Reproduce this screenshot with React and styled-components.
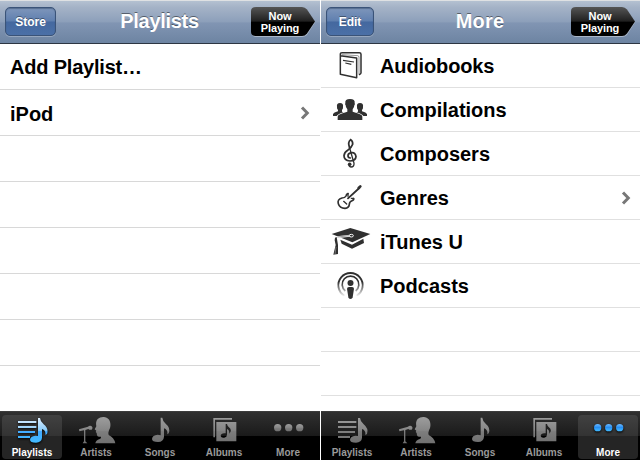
import React from "react";
import styled, { createGlobalStyle, css } from "styled-components";

const Global = createGlobalStyle`
  * { box-sizing: border-box; }
  body { margin: 0; background: #fff; font-family: "Liberation Sans", Arial, sans-serif; font-weight: 700; }
`;

const Screens = styled.div`
  width: 640px;
  height: 460px;
  display: grid;
  grid-template-columns: 320px 319px;
  column-gap: 1px;
  overflow: hidden;
  background: #fff;
`;
const Screen = styled.section`
  display: flex;
  flex-direction: column;
  height: 460px;
  min-width: 0;
`;
const NavBar = styled.header`
  height: 44px;
  flex: none;
  display: grid;
  grid-template-columns: 70px 1fr 70px;
  align-items: start;
  padding: 6px 4px 0 5px;
  border-top: 1px solid #dfe1e3;
  border-bottom: 1px solid #2d3642;
  background: linear-gradient(#b4c1d1 0, #a5b3c7 6px, #8c9fba 50%, #8195b3 52%, #6d84a2 100%);
`;
const NavButton = styled.button`
  justify-self: start;
  width: ${(p) => p.$width}px;
  height: 29px;
  padding: 0;
  border: 1px solid #3a5378;
  border-radius: 5px;
  background: linear-gradient(#7e96bb 0, #5f7faf 49%, #44689f 51%, #4b70a7 100%);
  box-shadow: 0 1px 0 rgba(255, 255, 255, 0.25), inset 0 1px 1px rgba(30, 50, 80, 0.4);
  color: #fff;
  font: 700 12px "Liberation Sans", Arial, sans-serif;
  text-shadow: 0 -1px 0 rgba(0, 0, 0, 0.4);
`;
const Title = styled.h1`
  margin: 0;
  padding: 2px 2px 0 0;
  text-align: center;
  color: #fff;
  font-size: 20px;
  line-height: 24px;
  letter-spacing: ${(p) => p.$tracking}px;
  text-shadow: 0 -1px 0 rgba(0, 0, 0, 0.45);
`;
const NowPlaying = styled.button`
  justify-self: end;
  display: grid;
  width: 65px;
  height: 31px;
  padding: 0;
  border: 0;
  background: none;
  color: #fff;
  font: 700 11px/12px "Liberation Sans", Arial, sans-serif;
  letter-spacing: -0.1px;
  > * { grid-area: 1 / 1; }
`;
const NowLabel = styled.span`
  z-index: 1;
  width: 58px;
  padding-top: 2.5px;
  text-align: center;
`;
const List = styled.ul`
  flex: 1;
  margin: 0;
  padding: 0;
  list-style: none;
  overflow: hidden;
  background: #fff;
`;
const Row = styled.li`
  display: flex;
  align-items: center;
  height: ${(p) => p.$height}px;
  padding-left: ${(p) => (p.$inset ? 10 : 0)}px;
  padding-right: ${(p) => (p.$inset ? 10 : 9)}px;
  border-bottom: 1px solid ${(p) => (p.$inset ? "#d8d8d8" : "#e0e0e0")};
  color: #000;
`;
const RowText = styled.span`
  flex: 1;
  font-size: 20px;
  line-height: 24px;
  letter-spacing: ${(p) => p.$tracking || 0}px;
  padding-top: ${(p) => (p.$drop ? 3 : 1)}px;
`;
const RowIcon = styled.svg`
  flex: none;
  width: 59px;
  height: 43px;
`;
const TabBar = styled.nav`
  flex: none;
  height: 49px;
  display: grid;
  grid-template-columns: 60px 60px 60px 60px 60px;
  column-gap: 4px;
  padding: 3px 0 2px ${(p) => p.$inset}px;
  border-top: 1px solid #3c3c3c;
  background: linear-gradient(#303030 0, #1a1a1a 24px, #000 24px);
`;
const Tab = styled.button`
  display: flex;
  flex-direction: column;
  align-items: center;
  height: 44px;
  padding: 0;
  border: 0;
  border-radius: 4px;
  background: none;
  color: #9a9a9a;
  font: 700 10px/12px "Liberation Sans", Arial, sans-serif;
  ${(p) =>
    p.$active &&
    css`
      color: #fff;
      background: linear-gradient(#414141 0, #333 21px, #252525 21px, #252525 100%);
    `}
`;
const TabIcon = styled.svg`
  width: 60px;
  height: 32px;
  flex: none;
  filter: ${(p) => (p.$active ? "drop-shadow(0 1px 1px #000)" : "none")};
`;

const Chevron = () => (
  <svg width="10" height="14" viewBox="0 0 10 14">
    <path d="M2 1.5 7.3 7 2 12.5" fill="none" stroke="#777" strokeWidth="3" />
  </svg>
);

const rowIcons = {
  Audiobooks: (
    <RowIcon viewBox="3 132 177 129" fill="none" stroke="#303030" strokeWidth="4.5" strokeLinejoin="round">
      <path d="M61 167 110 174V233L61 223V161Q61 158 66 158H118Q123 158 123 163V219Q123 222 117 224" />
      <path d="M65 164 113 167Q117 167 117 172V224" strokeWidth="1.5" />
      <path d="M69 181 102 186M76 189 94 193" strokeWidth="3.5" />
    </RowIcon>
  ),
  Compilations: (
    <RowIcon viewBox="3 264 177 129" fill="#303030">
      <path d="M53 360V350Q54 344 68 340L82 335V328Q77 323 77 316Q74 313 76 309Q74 297 90 297Q106 297 104 309Q106 313 103 316Q103 323 98 328V335L112 340Q126 344 127 350V360Z" />
      <path d="M39 348V342Q41 338 54 334V330Q50 326 51 321Q49 309 60 309Q71 309 69 321Q70 326 66 330V335L71 337Q54 342 50 348Z" />
      <path d="M141 348V342Q139 338 126 334V330Q130 326 129 321Q131 309 120 309Q109 309 111 321Q110 326 114 330V335L109 337Q126 342 130 348Z" />
    </RowIcon>
  ),
  Composers: (
    <RowIcon viewBox="3 6 177 129" fill="none" stroke="#303030" strokeLinecap="round">
      <path d="M89 53Q82 37 92 29Q99 34 98 43Q95 53 83 61Q73 67 72 77Q72 91 90 93Q107 92 108 80Q106 67 95 68Q84 69 84 77Q84 83 91 84" strokeWidth="5.2" />
      <path d="M88 51 102 99Q103 111 93 111Q86 110 87 103" strokeWidth="4" />
      <circle cx="89" cy="103" r="5.5" fill="#303030" stroke="none" />
    </RowIcon>
  ),
  Genres: (
    <RowIcon viewBox="3 138 177 129" fill="none" stroke="#303030" strokeLinejoin="round" strokeLinecap="round">
      <path d="M84 191Q79 192 78 198Q75 204 66 204Q51 208 55 221Q59 234 75 235Q87 234 88 223Q88 215 96 212Q102 210 101 206" strokeWidth="5" />
      <path d="M84 205 118 174" strokeWidth="5.500" />
      <path d="M116 174 121 169" strokeWidth="8" />
      <path d="M71 214 80 222M84 190V199M94 205H101" strokeWidth="4" />
    </RowIcon>
  ),
  "iTunes U": (
    <RowIcon viewBox="3 15 177 129">
      <path d="M35 57 91 39 151 57 97 82Z" fill="#303030" />
      <path d="M61 74 96 89 130 71 132 84 96 101 65 86Z" fill="#303030" />
      <path d="M90 62 47 67V85" fill="none" stroke="#fff" strokeWidth="6" />
      <path d="M45 68 50 66 52 78 54 90V117L40 119 47 90 44 76Z" fill="#303030" />
      <path d="M89 62 52 66" stroke="#303030" strokeWidth="1.500" />
      <ellipse cx="94" cy="62" rx="6" ry="4" fill="#303030" stroke="#fff" strokeWidth="3" />
      <path d="M48 96 45 118" stroke="#fff" strokeWidth="1" />
    </RowIcon>
  ),
  Podcasts: (
    <RowIcon viewBox="3 147 177 129" fill="none">
      <defs>
        <linearGradient id="cast" gradientUnits="userSpaceOnUse" x1="0" y1="175" x2="0" y2="248">
          <stop offset=".35" stopColor="#303030" />
          <stop offset=".95" stopColor="#303030" stopOpacity=".05" />
        </linearGradient>
      </defs>
      <path d="M73 242A36.5 36.5 0 1 1 110 242" stroke="url(#cast)" strokeWidth="5.5" />
      <path d="M76 228A25 25 0 1 1 107 228" stroke="url(#cast)" strokeWidth="5" />
      <circle cx="91.500" cy="204" r="9" fill="#303030" />
      <path d="M81 221Q81 216 87 216H96Q102 216 102 221L98 247Q97 252 91 252Q86 252 85 247Z" fill="#303030" />
    </RowIcon>
  ),
};

/* Tab artwork is drawn on a 180 x 96 grid, three units to the pixel. */
const tabArt = {
  Playlists: (
    <>
      <path d="M48 18H103V24H48ZM48 33H103V39H48ZM48 48H99V54H48ZM48 63H84V69H48Z" />
      <path d="M108 9H114Q115 20 125 28Q141 41 135 57L130 60Q132 46 120 42V68Q119 82 102 83Q84 83 84 74Q85 63 100 62L108 63Z" />
    </>
  ),
  Artists: (
    <>
      <path d="M88 85Q89 76 101 72Q106 70 105 65Q95 67 93 61L92 54 89 51 91 47 86 43 91 34Q88 20 95 12Q103 5 114 6Q128 8 132 20Q136 34 129 46Q126 53 128 60Q144 67 148 85Z" />
      <path d="M39 43 66 35Q70 31 76 33Q81 36 79 41Q77 46 70 44L67 42 58 45V79L64 85H50L54 79V46L40 49Z" />
    </>
  ),
  Songs: <path d="M92 8H97Q98 19 107 26Q123 39 116 55L112 58Q114 44 102 40V65Q101 80 84 81Q66 81 66 72Q67 60 83 59L92 61Z" />,
  Albums: (
    <>
      <path d="M58 9H114V14H63V67H58Z" />
      <path fillRule="evenodd" d="M67 21H127V79H67ZM95 27V55Q81 53 80 63Q82 70 91 68Q99 66 99 59V42Q107 46 106 56Q116 45 104 36Q100 33 99 27Z" />
    </>
  ),
  More: (
    <>
      <circle cx="59" cy="38" r="11" />
      <circle cx="92" cy="38" r="11" />
      <circle cx="125" cy="38" r="11" />
    </>
  ),
};

function Tabs({ active, prefix, inset }) {
  return (
    <TabBar $inset={inset}>
      {Object.keys(tabArt).map((name) => {
        const on = name === active;
        const dots = name === "More";
        const id = `${prefix}-${name}`;
        return (
          <Tab key={name} $active={on}>
            <TabIcon $active={on} viewBox="0 0 180 96" fill={`url(#${id})`}>
              <defs>
                <linearGradient id={id} gradientUnits="userSpaceOnUse" x1="0" y1={dots ? 27 : 8} x2="0" y2={dots ? 49 : 84}>
                  <stop offset="0" stopColor={on ? (dots ? "#6bb9ff" : "#e0efff") : "#9c9c9c"} />
                  <stop offset=".5" stopColor={on ? (dots ? "#258cf0" : "#8accfa") : "#868686"} />
                  <stop offset=".55" stopColor={on ? (dots ? "#2b98f7" : "#41aaff") : "#7d7d7d"} />
                  <stop offset="1" stopColor={on ? "#43bbff" : "#707070"} />
                </linearGradient>
              </defs>
              {tabArt[name]}
            </TabIcon>
            {name}
          </Tab>
        );
      })}
    </TabBar>
  );
}

function Nav({ title, action, width, tracking, prefix }) {
  return (
    <NavBar>
      <NavButton $width={width}>{action}</NavButton>
      <Title $tracking={tracking}>{title}</Title>
      <NowPlaying>
        <svg width="65" height="31" viewBox="0 0 65 31">
          <defs>
            <linearGradient id={`${prefix}-now`} x1="0" y1="0" x2="0" y2="1">
              <stop offset="0" stopColor="#555" />
              <stop offset=".49" stopColor="#202020" />
              <stop offset=".52" stopColor="#000" />
            </linearGradient>
          </defs>
          <path d="M5 1H51Q54 1 56 3L64 15.500 56 28Q54 30 51 30H5Q1 30 1 26V5Q1 1 5 1Z" fill="#a9b6c8" />
          <path d="M5 0H51Q54 0 56 2.500L64 14.500 56 26.500Q54 29 51 29H5Q0 29 0 25V4Q0 0 5 0Z" fill={`url(#${prefix}-now)`} />
        </svg>
        <NowLabel>Now<br />Playing</NowLabel>
      </NowPlaying>
    </NavBar>
  );
}

const playlists = [
  { name: "Add Playlist…", tracking: -0.2 },
  { name: "iPod", drop: true, chevron: true },
  {}, {}, {}, {}, {}, {},
];
const categories = [...Object.keys(rowIcons), "", ""];

export default function App() {
  return (
    <>
      <Global />
      <Screens>
        <Screen>
          <Nav title="Playlists" action="Store" width={51} tracking={-0.3} prefix="left" />
          <List>
            {playlists.map(({ name, tracking, drop, chevron }, i) => (
              <Row key={i} $height={46} $inset>
                <RowText $tracking={tracking} $drop={drop}>{name}</RowText>
                {chevron && <Chevron />}
              </Row>
            ))}
          </List>
          <Tabs active="Playlists" prefix="left" inset={2} />
        </Screen>
        <Screen>
          <Nav title="More" action="Edit" width={48} tracking={0.2} prefix="right" />
          <List>
            {categories.map((name, i) => (
              <Row key={i} $height={44}>
                {rowIcons[name]}
                <RowText $tracking={name === "Audiobooks" ? -0.12 : 0}>{name}</RowText>
                {name === "Genres" && <Chevron />}
              </Row>
            ))}
          </List>
          <Tabs active="More" prefix="right" inset={1} />
        </Screen>
      </Screens>
    </>
  );
}
